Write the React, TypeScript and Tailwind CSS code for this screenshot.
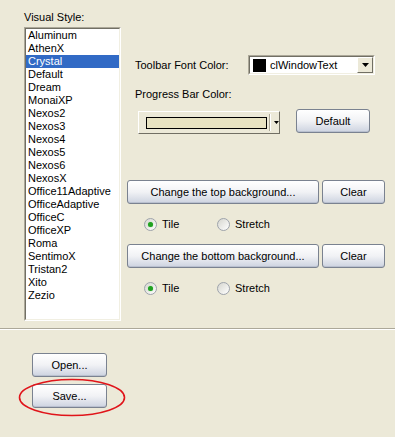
import React from "react";

const items = [
  "Aluminum","AthenX","Crystal","Default","Dream","MonaiXP","Nexos2","Nexos3","Nexos4","Nexos5","Nexos6","NexosX","Office11Adaptive","OfficeAdaptive","OfficeC","OfficeXP","Roma","SentimoX","Tristan2","Xito","Zezio",
];

function XPButton({ children, className = "" }: { children: React.ReactNode; className?: string }) {
  return (
    <div
      className={
        "h-[24px] flex items-center justify-center rounded-[3px] border border-[#7A8290] bg-gradient-to-b from-white via-[#F1F2F5] to-[#CDD3E0] shadow-[inset_0_-1px_0_#B9C0CF] text-black " +
        className
      }
    >
      {children}
    </div>
  );
}

function Radio({ checked, label, width }: { checked: boolean; label: string; width?: string }) {
  return (
    <div className={"flex items-center h-[13px] " + (width ?? "")}>
      <div className="w-[13px] h-[13px] rounded-full border border-[#9EA3AB] bg-gradient-to-br from-[#D6D6CF] to-white flex items-center justify-center">
        {checked && <div className="w-[5px] h-[5px] rounded-full bg-[#21A121] shadow-[0_0_1px_#6CCF6C]" />}
      </div>
      <span className="ml-[5px] leading-[13px]">{label}</span>
    </div>
  );
}

export default function App() {
  return (
    <div className="w-[395px] h-[437px] bg-[#ECE9D8] relative overflow-hidden text-[11px] text-black font-['Liberation_Sans',Arial,sans-serif]">
      <div className="flex h-[328px]">
        <div className="pl-[24px] pt-[11px] w-[121px] shrink-0">
          <div className="h-[13px] leading-[13px]">Visual Style:</div>
          <div className="mt-[3px] w-[97px] h-[294px] border border-t-[#ACA899] border-l-[#ACA899] border-r-white border-b-white">
            <div className="w-full h-full border border-t-[#716F64] border-l-[#716F64] border-r-[#F1EFE2] border-b-[#F1EFE2] bg-white">
              {items.map((it) => (
                <div
                  key={it}
                  className={
                    "h-[13px] leading-[13px] pl-[2px] whitespace-nowrap " +
                    (it === "Crystal" ? "bg-[#316AC5] text-white" : "")
                  }
                >
                  {it}
                </div>
              ))}
            </div>
          </div>
        </div>

        <div className="ml-[6px] w-[258px] pt-[55px]">
          <div className="flex items-center h-[20px]">
            <div className="pl-[8px] w-[121px]">Toolbar Font Color:</div>
            <div className="w-[127px] h-[20px] border border-t-[#ACA899] border-l-[#ACA899] border-r-white border-b-white">
              <div className="w-full h-full bg-white border border-t-[#716F64] border-l-[#716F64] border-r-[#F1EFE2] border-b-[#F1EFE2] flex items-center">
                <div className="ml-[3px] w-[13px] h-[13px] bg-black" />
                <span className="ml-[4px] flex-1">clWindowText</span>
                <div className="w-[16px] h-[16px] bg-[#ECE9D8] border border-t-white border-l-white border-r-[#716F64] border-b-[#716F64] flex items-center justify-center">
                  <svg width="7" height="4" viewBox="0 0 7 4"><path d="M0 0h7L3.5 4z" fill="#000" /></svg>
                </div>
              </div>
            </div>
          </div>

          <div className="mt-[13px] pl-[8px] h-[13px] leading-[13px]">Progress Bar Color:</div>

          <div className="mt-[8px] flex items-start h-[24px]">
            <div className="ml-[11px] mt-[2px] w-[142px] h-[23px] bg-[#ECE9D8] border border-t-white border-l-white border-r-[#716F64] border-b-[#716F64] flex items-center">
              <div className="ml-[7px] w-[122px] h-[12px] bg-[#E8E3C2] border border-black" />
              <div className="ml-[2px] w-[1px] h-[17px] bg-[#ACA899]" />
              <div className="w-[1px] h-[17px] bg-white" />
              <svg className="ml-[3px]" width="5" height="3" viewBox="0 0 5 3"><path d="M0 0h5L2.5 3z" fill="#000" /></svg>
            </div>
            <XPButton className="ml-[16px] w-[74px]">Default</XPButton>
          </div>

          <div className="mt-[47px] flex">
            <XPButton className="w-[192px]">Change the top background...</XPButton>
            <XPButton className="ml-[3px] w-[63px]">Clear</XPButton>
          </div>
          <div className="mt-[14px] flex pl-[17px]">
            <Radio checked label="Tile" width="w-[73px]" />
            <Radio checked={false} label="Stretch" />
          </div>

          <div className="mt-[13px] flex">
            <XPButton className="w-[192px]">Change the bottom background...</XPButton>
            <XPButton className="ml-[3px] w-[63px]">Clear</XPButton>
          </div>
          <div className="mt-[14px] flex pl-[17px]">
            <Radio checked label="Tile" width="w-[73px]" />
            <Radio checked={false} label="Stretch" />
          </div>
        </div>
      </div>

      <div className="h-[1px] bg-[#ACA899]" />
      <div className="h-[1px] bg-white" />

      <div className="pl-[32px] pt-[23px]">
        <XPButton className="w-[75px]">Open...</XPButton>
        <XPButton className="mt-[7px] w-[75px]">Save...</XPButton>
      </div>

      <svg className="absolute left-[18px] top-[378px] pointer-events-none" width="108" height="39" viewBox="0 0 108 39">
        <ellipse cx="54" cy="19.5" rx="52.5" ry="18" fill="none" stroke="#E0141A" strokeWidth="1.6" />
      </svg>
    </div>
  );
}
